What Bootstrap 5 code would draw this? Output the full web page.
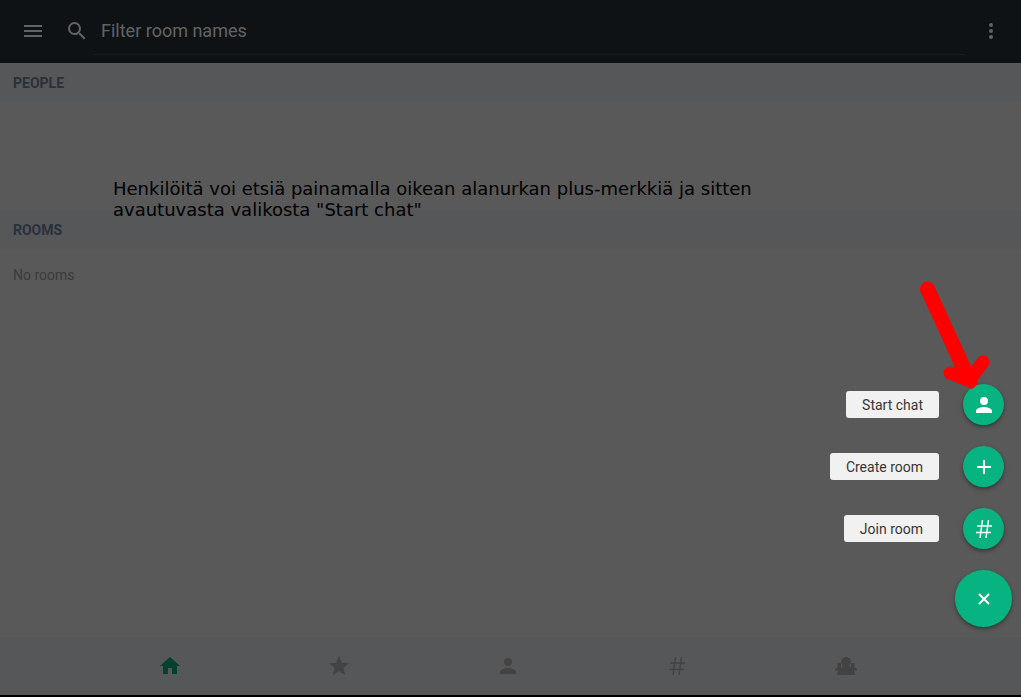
<!DOCTYPE html>
<html lang="en">
<head>
<meta charset="utf-8">
<meta name="viewport" content="width=device-width, initial-scale=1">
<title>Rooms</title>
<link href="https://cdn.jsdelivr.net/npm/bootstrap@5.3.0/dist/css/bootstrap.min.css" rel="stylesheet">
<style>
  body { font-family: Roboto, "Liberation Sans", sans-serif; font-size: 14px; line-height: 20px; background: #595959; color: #363636; }
  svg { display: block; flex: none; }
  .topbar { height: 63px; background: #0e1215; color: #636363; padding: 0 18px 1px 21px; }
  .topbar button { color: #636363; }
  .filter { height: 48px; margin: 0 14px 0 4px; border-bottom: 1px solid #171b1e; }
  .filter input, .filter input:focus { font-size: 18px; line-height: 24px; color: #636363; background: transparent; box-shadow: none; }
  .filter input::placeholder { color: #636363; opacity: 1; }
  .section-title { height: 39px; padding: 1px 13px 0; margin: 0; background: #555759; color: #2b303c; font-size: 14px; font-weight: 700; line-height: 20px; }
  .people { height: 108px; }
  .note { left: 113px; top: 115px; width: 640px; font: 18px/21px "DejaVu Sans", sans-serif; color: #000; }
  .empty { padding: 16px 13px; color: #3b3b3b; }
  .tabs { height: 60px; background: #555759; border-bottom: 2px solid #000; padding: 0 90px 0 85px; }
  .tabs a { color: #434343; }
  .tabs a.active { color: #02402f; }
  .actions { right: 9px; bottom: 70px; gap: 21px; }
  .action { gap: 24px; padding-right: 8px; }
  .tag { background: #f1f1f1; color: #363636; border-radius: 3px; padding: 4px 16px 3px; }
  .fab { width: 41px; height: 41px; border-radius: 50%; background: #06b381; color: #fff; box-shadow: 0 2px 4px rgba(0,0,0,.4); }
  .fab-main { width: 57px; height: 57px; }
  .pointer { right: 27px; bottom: 304px; pointer-events: none; }
</style>
</head>
<body class="d-flex flex-column min-vh-100 position-relative">

<svg class="d-none" aria-hidden="true">
  <symbol id="person" viewBox="0 0 24 24"><path fill="currentColor" d="M12 12a4 4 0 1 0 0-8 4 4 0 0 0 0 8zm0 2c-2.670 0-8 1.340-8 4v2h16v-2c0-2.660-5.330-4-8-4z"/></symbol>
  <symbol id="hash" viewBox="0 0 24 24"><path fill="none" stroke="currentColor" stroke-width="1.500" d="M10.500 3 8 21M16.500 3 14 21M5 9h15M4 15.500h15"/></symbol>
</svg>

<header class="topbar d-flex align-items-center">
  <button class="btn p-0 border-0" type="button" aria-label="Menu">
    <svg width="24" height="24" viewBox="0 0 24 24"><path fill="currentColor" d="M3 18h18v-2H3v2zm0-5h18v-2H3v2zm0-7v2h18V6H3z"/></svg>
  </button>
  <form class="d-flex align-items-center flex-grow-1 ms-3" onsubmit="return false">
    <label for="filter" class="ps-1"><svg width="24" height="24" viewBox="0 0 24 24" aria-label="Search"><path fill="currentColor" d="M15.500 14h-.79l-.28-.27A6.470 6.470 0 0 0 16 9.500 6.500 6.500 0 1 0 9.500 16c1.610 0 3.090-.59 4.230-1.570l.27.28v.79l5 4.990L20.490 19l-4.990-5zm-6 0a4.500 4.500 0 1 1 0-9 4.500 4.500 0 0 1 0 9z"/></svg></label>
    <div class="filter flex-grow-1 d-flex align-items-center">
      <input id="filter" class="form-control border-0 py-0 px-2" type="text" placeholder="Filter room names">
    </div>
  </form>
  <button class="btn p-0 border-0" type="button" aria-label="More options">
    <svg width="24" height="24" viewBox="0 0 24 24"><g fill="currentColor"><circle cx="12" cy="6" r="2"/><circle cx="12" cy="12" r="2"/><circle cx="12" cy="18" r="2"/></g></svg>
  </button>
</header>

<main class="flex-grow-1">
  <section class="position-relative">
    <h2 class="section-title d-flex align-items-center">PEOPLE</h2>
    <div class="people"></div>
    <p class="note position-absolute m-0">Henkilöitä voi etsiä painamalla oikean alanurkan plus-merkkiä ja sitten avautuvasta valikosta "Start chat"</p>
  </section>
  <section>
    <h2 class="section-title d-flex align-items-center">ROOMS</h2>
    <p class="empty m-0">No rooms</p>
  </section>
</main>

<nav class="tabs d-flex align-items-center" aria-label="Sections">
  <a href="#home" class="active d-flex flex-fill justify-content-center" aria-label="Home"><svg width="24" height="24" viewBox="0 0 24 24"><path fill="currentColor" d="M10 20v-6h4v6h5v-8h3L12 3 2 12h3v8z"/></svg></a>
  <a href="#favourites" class="d-flex flex-fill justify-content-center" aria-label="Favourites"><svg width="24" height="24" viewBox="0 0 24 24"><path fill="currentColor" d="M12 17.270 18.180 21l-1.640-7.030L22 9.240l-7.190-.61L12 2 9.190 8.630 2 9.240l5.460 4.730L5.820 21z"/></svg></a>
  <a href="#people" class="d-flex flex-fill justify-content-center" aria-label="People"><svg width="24" height="24"><use href="#person"/></svg></a>
  <a href="#rooms" class="d-flex flex-fill justify-content-center" aria-label="Rooms"><svg width="24" height="24"><use href="#hash"/></svg></a>
  <a href="#communities" class="d-flex flex-fill justify-content-center" aria-label="Communities"><svg width="24" height="24" viewBox="0 0 24 24"><g fill="currentColor"><circle cx="12" cy="8" r="5"/><path d="M3.500 9H7v4.500L9 12h6l2 1.500V9h3.500v4.500L23 15v1.500h-3l1 4.500H3l1-4.500H1V15l2.500-1.500z"/></g></svg></a>
</nav>

<div class="actions position-absolute d-flex flex-column align-items-end">
  <div class="action d-flex align-items-center">
    <label class="tag" for="start-chat">Start chat</label>
    <button id="start-chat" class="fab btn p-0 border-0 d-flex align-items-center justify-content-center" type="button"><svg width="24" height="24"><use href="#person"/></svg></button>
  </div>
  <div class="action d-flex align-items-center">
    <label class="tag" for="create-room">Create room</label>
    <button id="create-room" class="fab btn p-0 border-0 d-flex align-items-center justify-content-center" type="button"><svg width="24" height="24" viewBox="0 0 24 24"><path fill="currentColor" d="M19 13h-6v6h-2v-6H5v-2h6V5h2v6h6z"/></svg></button>
  </div>
  <div class="action d-flex align-items-center">
    <label class="tag" for="join-room">Join room</label>
    <button id="join-room" class="fab btn p-0 border-0 d-flex align-items-center justify-content-center" type="button"><svg width="24" height="24"><use href="#hash"/></svg></button>
  </div>
  <button class="fab fab-main btn p-0 border-0 d-flex align-items-center justify-content-center" type="button" aria-label="Close"><svg width="24" height="24" viewBox="0 0 24 24"><path stroke="currentColor" stroke-width="2" d="m7 7 10 10M17 7 7 17"/></svg></button>
</div>

<!-- Red arrow pointing at the start chat button -->
<svg class="pointer position-absolute" width="54" height="113" viewBox="940 280 54 113" overflow="visible" aria-hidden="true">
  <g fill="none" stroke="#f00" stroke-width="15" stroke-linecap="round" stroke-linejoin="round"><path d="M927.500 289 965 371"/><path stroke-width="13" d="M950 373 967 379M971 378 983 362"/></g>
  <path fill="#f00" d="m946 378 26 11 6-5-4-14-20-3z"/>
</svg>

<script src="https://cdn.jsdelivr.net/npm/bootstrap@5.3.0/dist/js/bootstrap.bundle.min.js"></script>
</body>
</html>
